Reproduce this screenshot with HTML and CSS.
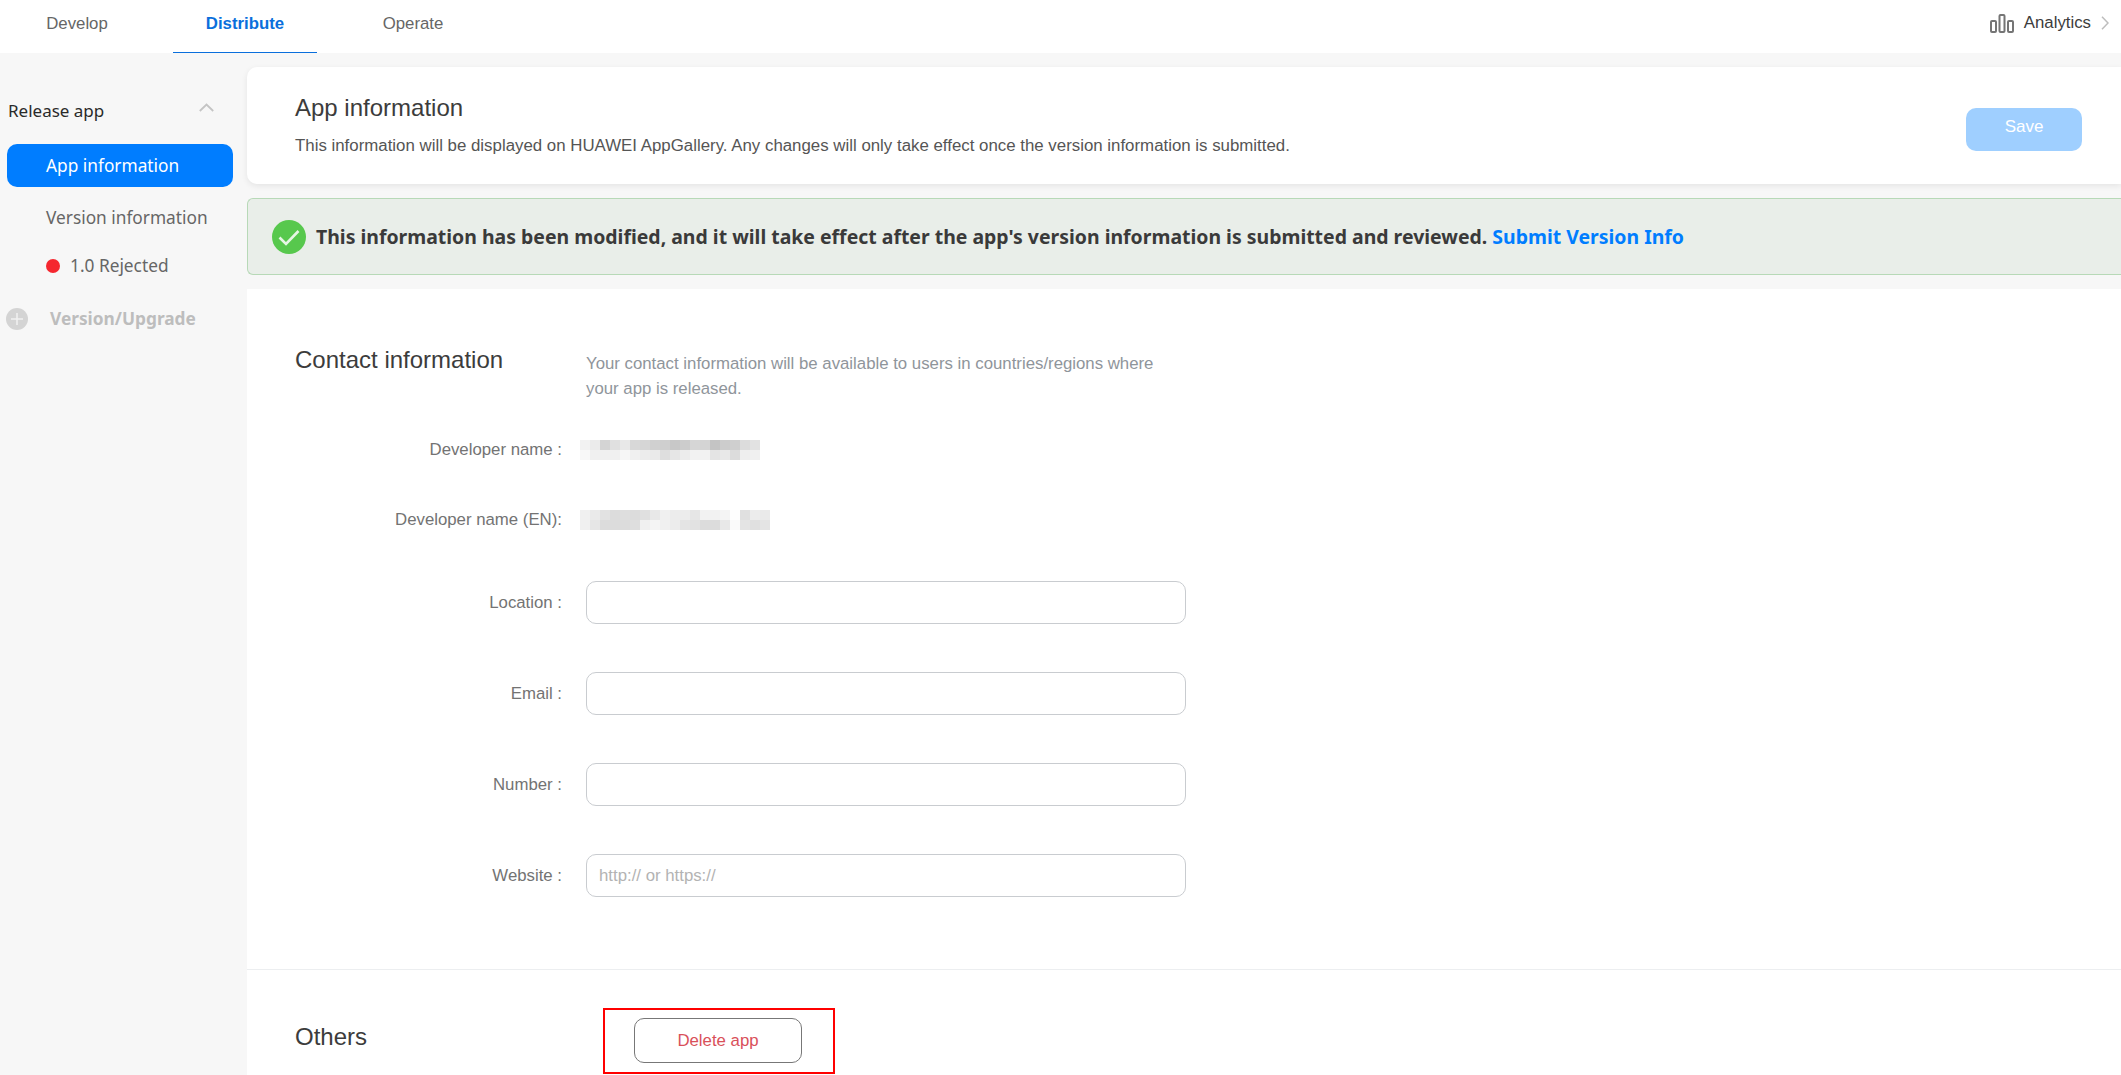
FILE: index.html
```html
<!DOCTYPE html>
<html lang="en">
<head>
<meta charset="utf-8">
<title>App information</title>
<link rel="stylesheet" href="styles.css">
</head>
<body>
<header class="topbar">
  <nav class="tabs">
    <a class="tab">Develop</a>
    <a class="tab tab-active">Distribute</a>
    <a class="tab">Operate</a>
  </nav>
  <div class="analytics">
    <svg class="bars" width="24" height="19" viewBox="0 0 24 19"><g fill="none" stroke="#757575" stroke-width="2"><rect x="1" y="7" width="5" height="11" rx="1"/><rect x="9.500" y="1" width="5" height="17" rx="1"/><rect x="18" y="7" width="5" height="11" rx="1"/></g></svg>
    <span>Analytics</span>
    <svg class="chev" width="8" height="14" viewBox="0 0 8 14"><path d="M1 .8 7 7l-6 6.200" fill="none" stroke="#bdbdbd" stroke-width="1.500"/></svg>
  </div>
</header>
<div class="body">
  <aside class="side">
    <div class="side-head">
      <span>Release app</span>
      <svg class="side-chev" width="15" height="9" viewBox="0 0 15 9"><path d="M.8 8 7.500 1.500 14.200 8" fill="none" stroke="#c4c4c4" stroke-width="1.800"/></svg>
    </div>
    <a class="side-item side-active">App information</a>
    <a class="side-item side-ver">Version information</a>
    <a class="side-item side-rej"><i class="dot"></i>1.0 Rejected</a>
    <div class="side-up">
      <svg width="22" height="22" viewBox="0 0 22 22"><circle cx="11" cy="11" r="11" fill="#d4d4d4"/><path d="M11 5v12M5 11h12" stroke="#f1f1f1" stroke-width="1.500"/></svg>
      <span>Version/Upgrade</span>
    </div>
  </aside>
  <main class="main">
    <section class="card">
      <div>
        <h1>App information</h1>
        <p>This information will be displayed on HUAWEI AppGallery. Any changes will only take effect once the version information is submitted.</p>
      </div>
      <button class="save">Save</button>
    </section>
    <section class="banner">
      <svg width="34" height="34" viewBox="0 0 34 34"><circle cx="17" cy="17" r="17" fill="#57c84d"/><path d="M7.500 17.500l6.500 6.500L26.500 11" fill="none" stroke="#e6f6e4" stroke-width="2.600"/></svg>
      <span>This information has been modified, and it will take effect after the app's version information is submitted and reviewed. <a>Submit Version Info</a></span>
    </section>
    <section class="form">
      <div class="contact-head">
        <h2>Contact information</h2>
        <p>Your contact information will be available to users in countries/regions where your app is released.</p>
      </div>
      <div class="row row-static">
        <label>Developer name :</label>
        <svg class="mask" width="180" height="20" viewBox="0 0 18 2" shape-rendering="crispEdges">
          <rect x="0" y="0" width="1" height="1" fill="#f2f2f2"/><rect x="1" y="0" width="1" height="1" fill="#ebebeb"/><rect x="2" y="0" width="1" height="1" fill="#d4d4d4"/><rect x="3" y="0" width="1" height="1" fill="#e0e0e0"/><rect x="4" y="0" width="1" height="1" fill="#e8e8e8"/><rect x="5" y="0" width="1" height="1" fill="#d8d8d8"/><rect x="6" y="0" width="1" height="1" fill="#d6d6d6"/><rect x="7" y="0" width="1" height="1" fill="#d0d0d0"/><rect x="8" y="0" width="1" height="1" fill="#cfcfcf"/><rect x="9" y="0" width="1" height="1" fill="#c8c8c8"/><rect x="10" y="0" width="1" height="1" fill="#cccccc"/><rect x="11" y="0" width="1" height="1" fill="#d6d6d6"/><rect x="12" y="0" width="1" height="1" fill="#d4d4d4"/><rect x="13" y="0" width="1" height="1" fill="#c4c4c4"/><rect x="14" y="0" width="1" height="1" fill="#cccccc"/><rect x="15" y="0" width="1" height="1" fill="#cfcfcf"/><rect x="16" y="0" width="1" height="1" fill="#dcdcdc"/><rect x="17" y="0" width="1" height="1" fill="#e2e2e2"/>
          <rect x="0" y="1" width="1" height="1" fill="#f8f8f8"/><rect x="1" y="1" width="1" height="1" fill="#f0f0f0"/><rect x="2" y="1" width="1" height="1" fill="#f0f0f0"/><rect x="3" y="1" width="1" height="1" fill="#f0f0f0"/><rect x="4" y="1" width="1" height="1" fill="#f6f6f6"/><rect x="5" y="1" width="1" height="1" fill="#f0f0f0"/><rect x="6" y="1" width="1" height="1" fill="#ececec"/><rect x="7" y="1" width="1" height="1" fill="#eaeaea"/><rect x="8" y="1" width="1" height="1" fill="#dedede"/><rect x="9" y="1" width="1" height="1" fill="#e6e6e6"/><rect x="10" y="1" width="1" height="1" fill="#ececec"/><rect x="11" y="1" width="1" height="1" fill="#f2f2f2"/><rect x="12" y="1" width="1" height="1" fill="#f2f2f2"/><rect x="13" y="1" width="1" height="1" fill="#e4e4e4"/><rect x="14" y="1" width="1" height="1" fill="#e8e8e8"/><rect x="15" y="1" width="1" height="1" fill="#dcdcdc"/><rect x="16" y="1" width="1" height="1" fill="#eeeeee"/><rect x="17" y="1" width="1" height="1" fill="#f0f0f0"/>
        </svg>
      </div>
      <div class="row row-static row-en">
        <label>Developer name (EN):</label>
        <svg class="mask" width="190" height="20" viewBox="0 0 19 2" shape-rendering="crispEdges">
          <rect x="0" y="0" width="1" height="1" fill="#f0f0f0"/><rect x="1" y="0" width="1" height="1" fill="#eaeaea"/><rect x="2" y="0" width="1" height="1" fill="#e2e2e2"/><rect x="3" y="0" width="1" height="1" fill="#dcdcdc"/><rect x="4" y="0" width="1" height="1" fill="#dedede"/><rect x="5" y="0" width="1" height="1" fill="#dcdcdc"/><rect x="6" y="0" width="1" height="1" fill="#e0e0e0"/><rect x="7" y="0" width="1" height="1" fill="#e8e8e8"/><rect x="8" y="0" width="1" height="1" fill="#f0f0f0"/><rect x="9" y="0" width="1" height="1" fill="#ececec"/><rect x="10" y="0" width="1" height="1" fill="#ececec"/><rect x="11" y="0" width="1" height="1" fill="#e6e6e6"/><rect x="12" y="0" width="1" height="1" fill="#f2f2f2"/><rect x="13" y="0" width="1" height="1" fill="#f2f2f2"/><rect x="14" y="0" width="1" height="1" fill="#f4f4f4"/><rect x="15" y="0" width="1" height="1" fill="#fefefe"/><rect x="16" y="0" width="1" height="1" fill="#e0e0e0"/><rect x="17" y="0" width="1" height="1" fill="#ececec"/><rect x="18" y="0" width="1" height="1" fill="#eaeaea"/>
          <rect x="0" y="1" width="1" height="1" fill="#f0f0f0"/><rect x="1" y="1" width="1" height="1" fill="#e6e6e6"/><rect x="2" y="1" width="1" height="1" fill="#dcdcdc"/><rect x="3" y="1" width="1" height="1" fill="#dcdcdc"/><rect x="4" y="1" width="1" height="1" fill="#dcdcdc"/><rect x="5" y="1" width="1" height="1" fill="#dedede"/><rect x="6" y="1" width="1" height="1" fill="#f0f0f0"/><rect x="7" y="1" width="1" height="1" fill="#f4f4f4"/><rect x="8" y="1" width="1" height="1" fill="#f0f0f0"/><rect x="9" y="1" width="1" height="1" fill="#ececec"/><rect x="10" y="1" width="1" height="1" fill="#e4e4e4"/><rect x="11" y="1" width="1" height="1" fill="#e2e2e2"/><rect x="12" y="1" width="1" height="1" fill="#dcdcdc"/><rect x="13" y="1" width="1" height="1" fill="#dcdcdc"/><rect x="14" y="1" width="1" height="1" fill="#e8e8e8"/><rect x="15" y="1" width="1" height="1" fill="#fafafa"/><rect x="16" y="1" width="1" height="1" fill="#e4e4e4"/><rect x="17" y="1" width="1" height="1" fill="#e0e0e0"/><rect x="18" y="1" width="1" height="1" fill="#e4e4e4"/>
        </svg>
      </div>
      <div class="row row-input"><label>Location :</label><input class="field" type="text"></div>
      <div class="row row-input"><label>Email :</label><input class="field" type="text"></div>
      <div class="row row-input"><label>Number :</label><input class="field" type="text"></div>
      <div class="row row-input"><label>Website :</label><input class="field" type="text" placeholder="http:// or https://"></div>
      <hr class="divider">
      <div class="others">
        <h2>Others</h2>
        <div class="redbox"><button class="del">Delete app</button></div>
      </div>
    </section>
  </main>
</div>
</body>
</html>
```
FILE: styles.css
```css
* { box-sizing: border-box; }
html, body { margin: 0; height: 1075px; overflow: hidden; }
body { background: #f7f7f7; font-family: "Liberation Sans", Arial, sans-serif; color: #3c3c3c; }
h1, h2, p { margin: 0; font-weight: 400; }

.topbar { height: 53px; background: #fff; display: flex; justify-content: space-between; align-items: flex-start; }
.tabs { display: flex; gap: 24px; padding-left: 5px; }
.tab { width: 144px; height: 53px; padding-top: 14px; text-align: center; font-size: 16.8px; line-height: 20px; color: #666; }
.tab-active { color: #0a6fdc; font-weight: 700; border-bottom: 1px solid #0a6fdc; }
.analytics { display: flex; align-items: center; gap: 10px; padding: 12px 12px 0 0; font-size: 16.8px; line-height: 22px; color: #3c3c3c; }
.analytics .bars { margin-top: 1px; }

.body { display: flex; height: 1022px; }
.side { width: 247px; flex: none; padding: 42px 14px 0 7px; font-family: "Noto Sans", sans-serif; }
.side-head { display: flex; justify-content: space-between; align-items: center; height: 30px; font-size: 17px; color: #2a2a2a; padding: 0 19px 0 1px; }
.side-chev { margin-bottom: 5px; }
.side-item { display: flex; align-items: center; height: 43px; font-size: 17.3px; padding-left: 39px; }
.side-active { background: #007dff; color: #fff; border-radius: 10px; margin-top: 19px; }
.side-ver { color: #666; margin-top: 9px; }
.side-rej { color: #666; margin-top: 5px; }
.dot { width: 14px; height: 14px; border-radius: 50%; background: #f5272f; margin-right: 10px; }
.side-up { display: flex; align-items: center; gap: 22px; margin: 20px 0 0 -1px; font-size: 17.3px; font-weight: 700; color: #bdbdbd; }

.main { flex: 1; min-width: 0; }
.card { height: 117px; margin-top: 14px; background: #fff; border-radius: 10px 0 0 10px; box-shadow: 0 2px 6px rgba(0,0,0,.08); display: flex; justify-content: space-between; padding: 26px 39px 0 48px; }
.card h1 { font-size: 24px; line-height: 30px; color: #3c3c3c; }
.card p { font-size: 16.85px; line-height: 22px; margin-top: 12px; color: #555; }
.save { width: 116px; height: 43px; margin-top: 15px; padding: 0 0 5px; border: 0; border-radius: 10px; background: #9fcfff; color: #fff; font: 17px "Liberation Sans", sans-serif; }

.banner { height: 77px; margin-top: 14px; background: #e9eee9; border: 1px solid #b7d9b7; border-right: 0; border-radius: 6px 0 0 6px; display: flex; align-items: center; gap: 10px; padding-left: 24px; font-family: "Noto Sans", sans-serif; font-weight: 700; font-size: 19.45px; color: #3a3a3a; }
.banner a { color: #007dff; }

.form { margin-top: 14px; background: #fff; height: 786px; }
.contact-head { display: flex; padding: 54px 0 0 48px; }
.contact-head h2 { width: 291px; font-size: 24px; line-height: 34px; }
.contact-head p { width: 580px; font-size: 16.8px; line-height: 25px; color: #8f959b; padding-top: 8px; }
.row { display: flex; align-items: center; }
.row label { width: 315px; text-align: right; font-size: 16.8px; color: #737373; flex: none; }
.row-static { height: 20px; margin-top: 39px; }
.row-en { margin-top: 50px; }
.mask { margin-left: 18px; }
.row-input { height: 43px; margin-top: 48px; }
.row-input label { padding-top: 1px; }
.row-en + .row-input { margin-top: 51px; }
.field { width: 600px; height: 43px; margin-left: 24px; border: 1px solid #c9ccd0; border-radius: 10px; background: #fff; padding: 0 12px; font: 16.8px "Liberation Sans", sans-serif; outline: none; }
.field::placeholder { color: #b3b3b3; opacity: 1; }
.divider { height: 1px; border: 0; background: #eceef0; margin: 72px 0 0; }
.others { display: flex; padding: 38px 0 0 48px; }
.others h2 { width: 308px; font-size: 24px; line-height: 58px; }
.redbox { width: 232px; height: 66px; border: 2px solid #f00; padding: 8px 0 0 29px; }
.del { width: 168px; height: 45px; border: 1px solid #777; border-radius: 10px; background: #fff; color: #d9505a; font: 16.8px "Liberation Sans", sans-serif; }
```
